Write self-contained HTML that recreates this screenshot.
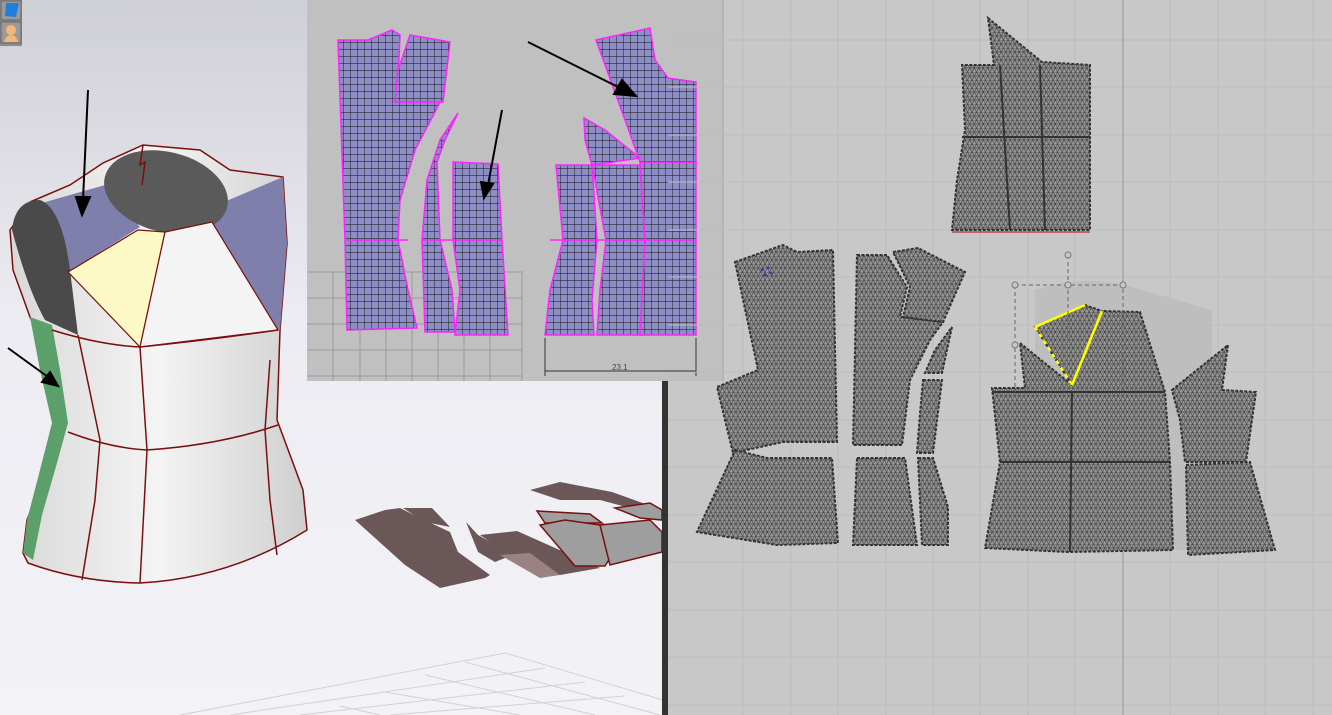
<!DOCTYPE html>
<html><head><meta charset="utf-8"><style>
html,body{margin:0;padding:0;width:1332px;height:715px;overflow:hidden;background:#f2f2f6}
svg{display:block}
</style></head><body>
<svg width="1332" height="715" viewBox="0 0 1332 715" xmlns="http://www.w3.org/2000/svg" font-family="Liberation Sans, sans-serif">
<defs>
<linearGradient id="bg" x1="0" y1="0" x2="0" y2="1">
<stop offset="0" stop-color="#cfcfd6"/><stop offset="0.45" stop-color="#ececf2"/><stop offset="1" stop-color="#f3f3f7"/>
</linearGradient>
<pattern id="m" width="9" height="8" patternUnits="userSpaceOnUse">
<rect width="9" height="8" fill="#9a9a9a"/>
<path d="M0 0H9M0 4H9M0 0L4.5 8M4.5 0L9 8M9 0L4.5 8M4.5 0L0 8" stroke="#4a4a4a" stroke-width="0.7" fill="none"/>
</pattern>
<pattern id="b" width="7" height="7" patternUnits="userSpaceOnUse">
<rect width="7" height="7" fill="#8e8ec6"/>
<path d="M0 0H7M0 0V7" stroke="#111" stroke-width="0.9"/>
</pattern>
<linearGradient id="wt" x1="0" y1="0" x2="1" y2="0">
<stop offset="0" stop-color="#d8d8d8"/><stop offset="0.5" stop-color="#f4f4f4"/><stop offset="1" stop-color="#cfcfcf"/>
</linearGradient>
</defs>

<rect x="0" y="0" width="663" height="715" fill="url(#bg)"/>
<rect x="0" y="0" width="22" height="46" fill="#8c8c8c"/>
<rect x="1" y="1" width="20" height="19" fill="#9a9a9a" stroke="#666"/>
<path d="M6 3L19 3L16 17L5 16Z" fill="#1e7fe0"/>
<rect x="1" y="22" width="20" height="21" fill="#9a9a9a" stroke="#666"/>
<circle cx="11" cy="30" r="5" fill="#f7b577"/><path d="M4 42Q6 35 11 35Q16 35 18 42Z" fill="#f7b577"/>

<g stroke="#d2d2d6" stroke-width="1" fill="none">
<path d="M180 715L505 653L663 700"/>
<path d="M230 715L545 668"/><path d="M300 715L585 682"/><path d="M390 715L625 696"/>
<path d="M385 692L520 715"/><path d="M425 675L595 715"/><path d="M465 662L660 715"/><path d="M340 706L380 715"/>
</g>

<g fill="#6b5757">
<path d="M355 520L385 510L400 508L418 517L450 532L458 552L490 575L485 578L440 588L405 565Z"/>
<path d="M403 508L432 508L450 527L425 522Z"/>
<path d="M466 522L478 535L505 550L510 556L495 562L478 552Z" />
<path d="M480 535L517 531L600 568L560 575L520 562Z"/>
<path d="M530 490L560 482L612 492L648 505L630 508L600 500L560 500Z"/>
</g>
<path d="M500 555L530 553L560 575L540 578Z" fill="#9a8282"/>
<g fill="#9e9e9e" stroke="#7a0f0f" stroke-width="1.5">
<path d="M537 511L590 514L602 523L545 523Z"/>
<path d="M540 525L565 520L600 525L620 542L605 566L575 566Z"/>
<path d="M600 525L650 520L662 532L662 552L610 565Z"/>
<path d="M615 508L650 503L662 510L662 520L640 518Z"/>
</g>

<path d="M23 553L28 563Q80 582 140 583Q230 578 307 530L303 490L293 463L277 420L280 330L287 243L283 177L230 170L200 150L143 145L103 163L70 185L30 202L10 230L13 270L30 317L53 370L67 423L47 470L27 520Z" fill="url(#wt)" stroke="#7a0f0f" stroke-width="1.5"/>
<path d="M30 317L52 325L60 370L68 423L55 470L42 515L33 560L23 553L27 520L40 470L52 423L40 370Z" fill="#5b9f6a"/>
<path d="M35 205L105 185L122 205L140 227L68 272L55 255Z" fill="#7f7fac"/>
<path d="M205 210L283 177L287 243L280 330L275 330L212 222Z" fill="#7f7fac"/>
<path d="M12 230Q15 200 40 200Q62 208 70 270L78 335L45 320Q28 290 12 230Z" fill="#4a4a4a"/>
<ellipse cx="166" cy="192" rx="63" ry="40" transform="rotate(14 166 192)" fill="#5a5a5a"/>
<path d="M68 272L138 230L165 232L140 347Z" fill="#fdf9c6" stroke="#7a0f0f" stroke-width="1.2"/>
<path d="M165 232L212 222L278 330L140 347Z" fill="#f4f4f4" stroke="#7a0f0f" stroke-width="1.2"/>
<g stroke="#7a0f0f" stroke-width="1.5" fill="none">
<path d="M52 330Q100 345 140 347Q210 340 278 330"/>
<path d="M68 432Q110 448 147 450Q220 445 278 425"/>
<path d="M78 335L100 440L95 500L82 580"/>
<path d="M140 347L147 450L140 583"/>
<path d="M270 360L265 430L270 500L277 555"/>
<path d="M143 145L140 165L145 162L142 185"/>
</g>
<g stroke="#000" stroke-width="2" fill="#000">
<path d="M88 90L83 200" fill="none"/><path d="M76 197L82 215L90 197Z"/>
<path d="M8 348L48 377" fill="none"/><path d="M42 382L58 386L50 372Z"/>
</g>

<rect x="307" y="0" width="417" height="381" fill="#c0c0c0"/>
<g stroke="#9a9a9a" stroke-width="1" fill="none">
<path d="M307 272H522V381"/><path d="M307 298H522M307 324H522M307 350H522M307 376H522"/>
<path d="M333 272V381M360 272V381M386 272V381M412 272V381M438 272V381M464 272V381M490 272V381"/>
</g>
<g fill="url(#b)" stroke="#ff22ff" stroke-width="1.5">
<path d="M338 40L368 40L392 30L400 35L397 102L440 102L437 108L415 150L400 200L398 240L408 290L417 328L347 330L345 240Z"/>
<path d="M410 35L450 42L443 102L395 102L398 70Z"/>
<path d="M458 113L445 140L437 162L440 240L452 290L455 332L425 332L422 240L427 180L440 140Z"/>
<path d="M453 162L498 164L502 240L508 335L455 335L460 290L453 240Z"/>
<path d="M556 165L592 165L597 240L592 300L594 335L545 335L550 290L563 240Z"/>
<path d="M592 165L640 165L645 240L643 335L597 335L600 290L606 240Z"/>
<path d="M640 162L696 162L696 335L640 335L645 240Z"/>
<path d="M596 40L650 28L655 60L668 78L696 82L696 162L640 162L625 120Z"/>
<path d="M584 118L605 130L640 158L592 165L585 140Z"/>
</g>
<g stroke="#ff22ff" stroke-width="1.5"><path d="M347 240H408M422 240H502M550 240H696"/></g>
<g stroke="#000" stroke-width="2" fill="#000">
<path d="M502 110L488 185" fill="none"/><path d="M481 182L484 198L493 184Z"/>
<path d="M528 42L620 88" fill="none"/><path d="M614 94L636 96L622 80Z"/>
</g>
<g stroke="#333" stroke-width="1" fill="none"><path d="M545 338V376M696 338V376M545 371H696"/></g>
<text x="612" y="370" font-size="8" fill="#444">23.1</text>

<rect x="662" y="381" width="6" height="334" fill="#333"/>
<rect x="722" y="0" width="2" height="381" fill="#b4b4b4"/>

<rect x="724" y="0" width="608" height="715" fill="#c8c8c8"/>
<rect x="668" y="381" width="56" height="334" fill="#c8c8c8"/>
<g stroke="#bdbdbd" stroke-width="1">
<path d="M743 0V715M791 0V715M838 0V715M886 0V715M933 0V715M980 0V715M1028 0V715M1075 0V715M1170 0V715M1218 0V715M1265 0V715M1313 0V715"/>
<path d="M668 40H1332M668 87H1332M668 135H1332M668 182H1332M668 230H1332M668 277H1332M668 325H1332M668 372H1332M668 420H1332M668 467H1332M668 515H1332M668 562H1332M668 610H1332M668 657H1332M668 705H1332"/>
</g>
<path d="M1123 0V715" stroke="#a8a8a8" stroke-width="1.5"/>
<path d="M1035 290Q1080 275 1125 285Q1160 295 1212 310L1214 550L1035 550Z" fill="#bebebe"/>

<g fill="url(#m)" stroke="#333" stroke-width="2" stroke-dasharray="3 1.5">
<path d="M988 18L1042 62L1090 65L1090 230L952 230L957 180L965 130L962 65L994 65Z"/>
<path d="M735 262L783 245L797 252L833 250L837 442L783 442L733 453L717 387L758 370Z"/>
<path d="M735 450L767 458L832 458L838 543L777 545L697 532Z"/>
<path d="M857 255L887 255L907 287L900 317L943 322L930 340L910 380L902 445L853 445Z"/>
<path d="M893 252L918 248L965 272L943 322L903 317L910 287Z"/>
<path d="M952 327L942 373L925 373L935 350Z"/>
<path d="M923 380L942 380L933 453L917 453L920 413Z"/>
<path d="M857 458L905 458L917 545L853 545Z"/>
<path d="M918 458L933 458L948 507L948 545L922 545Z"/>
<path d="M1020 343L1072 385L1102 311L1140 312L1165 392L1170 462L1173 550L1068 552L985 548L1000 462L992 388L1025 388Z"/>
<path d="M1035 327L1085 305L1102 311L1072 385Z"/>
<path d="M1172 390L1228 345L1222 390L1256 392L1246 462L1185 462L1180 420Z"/>
<path d="M1186 465L1250 462L1275 550L1188 555Z"/>
</g>
<g stroke="#333" stroke-width="2" fill="none">
<path d="M962 137H1090M1000 65L1010 230M1040 65L1045 230"/>
<path d="M992 392H1165M1000 462H1170M1072 392L1070 552"/>
</g>
<path d="M1035 327L1085 305M1102 311L1072 385" stroke="#ffff00" stroke-width="2.5"/>
<path d="M1035 327L1072 385" stroke="#ffff00" stroke-width="2.5" stroke-dasharray="4 4"/>
<path d="M952 232H1090" stroke="#b03030" stroke-width="1.2"/>
<g stroke="#666" stroke-width="1" fill="none" stroke-dasharray="4 3">
<path d="M1015 285H1123V392M1015 285V392M1068 255V345"/>
</g>
<g stroke="#777" fill="#c8c8c8">
<circle cx="1015" cy="285" r="3"/><circle cx="1068" cy="285" r="3"/><circle cx="1123" cy="285" r="3"/>
<circle cx="1068" cy="255" r="3"/><circle cx="1015" cy="345" r="3"/>
</g>
<g fill="#3a3aa0"><circle cx="762" cy="270" r="1.5"/><circle cx="768" cy="268" r="1.5"/><circle cx="765" cy="275" r="1.5"/><circle cx="771" cy="273" r="1.5"/></g>
</svg>
</body></html>
